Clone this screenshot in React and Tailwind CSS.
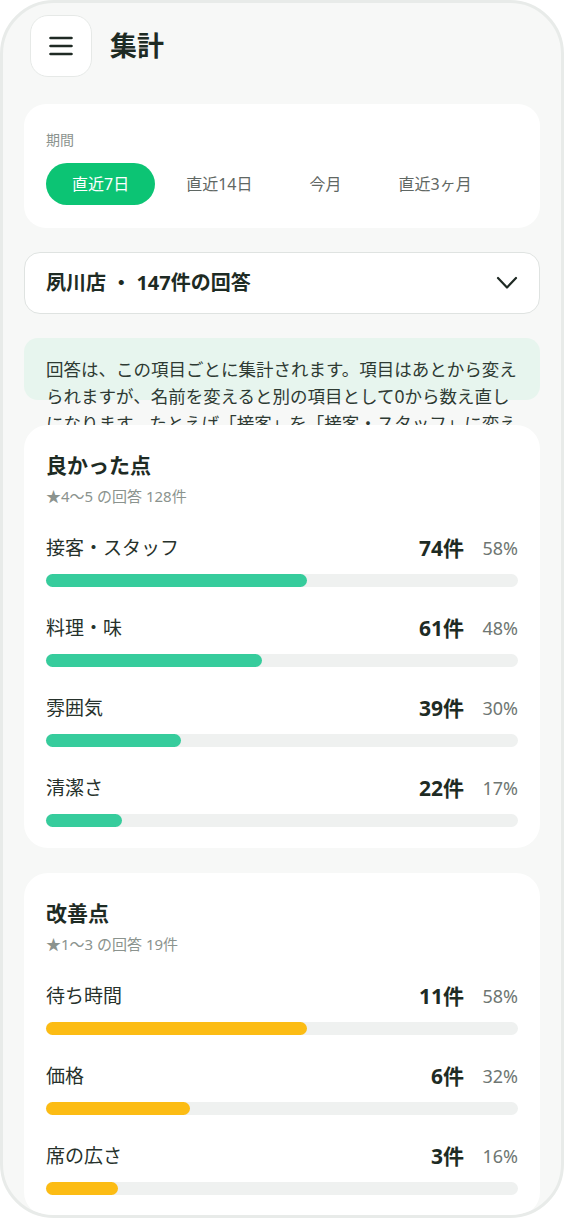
import { useState } from 'react';

const periods = ['直近7日', '直近14日', '今月', '直近3ヶ月'];

const goodItems = [
  { label: '接客・スタッフ', count: 74, pct: 58 },
  { label: '料理・味', count: 61, pct: 48 },
  { label: '雰囲気', count: 39, pct: 30 },
  { label: '清潔さ', count: 22, pct: 17 },
];

const badItems = [
  { label: '待ち時間', count: 11, pct: 58 },
  { label: '価格', count: 6, pct: 32 },
  { label: '席の広さ', count: 3, pct: 16 },
];

const StatCard = ({ title, sub, items, color }) => (
  <div className="relative rounded-[24px] bg-white px-[22px] pt-[26px] pb-[21px]">
    <h2 className="text-[21px] leading-[28px] font-bold text-[#1e2b24]">{title}</h2>
    <p className="mt-[7px] text-[15px] leading-[20px] text-[#8b938e]">{sub}</p>
    <div className="mt-[29px] flex flex-col gap-[28px]">
      {items.map((it) => (
        <div key={it.label}>
          <div className="flex items-center justify-between">
            <span className="text-[19px] leading-[26px] text-[#26312b]">{it.label}</span>
            <div className="flex items-center gap-[12px]">
              <span className="text-[21px] leading-[26px] font-bold text-[#1e2b24]">{it.count}件</span>
              <span className="w-[42px] text-right text-[18px] leading-[26px] text-[#6e7672]">{it.pct}%</span>
            </div>
          </div>
          <div className="mt-[13px] h-[13px] w-full rounded-full bg-[#eff1f0]">
            <div className={`h-full rounded-full ${color}`} style={{ width: `${it.pct * 0.952}%` }} />
          </div>
        </div>
      ))}
    </div>
  </div>
);

export default function App() {
  const [period, setPeriod] = useState(0);

  return (
    <div className="h-[1218px] w-[564px] bg-white" style={{ fontFamily: '"Noto Sans", "Noto Sans CJK JP", sans-serif' }}>
      <div className="h-full overflow-hidden rounded-[54px] border-[3px] border-[#e8ebe9] bg-[#f7f8f7] px-[21px] pt-[12px]">
        {/* header */}
        <div className="flex items-center gap-[18px] pl-[6px]">
          <button className="flex h-[62px] w-[62px] items-center justify-center rounded-[18px] border border-[#e6e9e7] bg-white">
            <svg width="24" height="20" viewBox="0 0 24 20" fill="none" stroke="#1f2a24" strokeWidth="2.6" strokeLinecap="round">
              <path d="M1.5 2h21M1.5 10h21M1.5 18h21" />
            </svg>
          </button>
          <h1 className="text-[27px] font-bold text-[#1e2b24]">集計</h1>
        </div>

        {/* period */}
        <div className="mt-[27px] rounded-[22px] bg-white px-[22px] pt-[26px] pb-[23px]">
          <p className="text-[14px] leading-[20px] text-[#8b938e]">期間</p>
          <div className="mt-[13px] flex gap-[5px]">
            {periods.map((p, i) => (
              <button
                key={p}
                onClick={() => setPeriod(i)}
                className={`h-[42px] rounded-full px-[26px] text-[16px] ${
                  period === i ? 'bg-[#0cc474] text-white' : 'text-[#5f6763]'
                }`}
              >
                {p}
              </button>
            ))}
          </div>
        </div>

        {/* store select */}
        <button className="mt-[24px] flex h-[62px] w-full items-center justify-between rounded-[16px] border-[1.5px] border-[#dfe3e1] bg-white pl-[21px] pr-[21px]">
          <span className="text-[20px] font-bold text-[#1e2b24]">夙川店 ・ 147件の回答</span>
          <svg width="22" height="14" viewBox="0 0 22 14" fill="none" stroke="#1f2a24" strokeWidth="2.2" strokeLinecap="round" strokeLinejoin="round">
            <path d="M2 2l9 9.5L20 2" />
          </svg>
        </button>

        {/* note */}
        <div className="mt-[24px] h-[62px] rounded-[14px] bg-[#e7f5ee] pl-[22px] pr-[19px] pt-[18px]">
          <p className="text-[17.5px] leading-[27px] text-[#2e3a33]">
            回答は、この項目ごとに集計されます。項目はあとから変えられますが、名前を変えると別の項目として0から数え直しになります。たとえば「接客」を「接客・スタッフ」に変えると、別の項目として扱われます。
          </p>
        </div>

        <div className="mt-[25px] flex flex-col gap-[25px]">
          <StatCard title="良かった点" sub="★4～5 の回答 128件" items={goodItems} color="bg-[#36cc9c]" />
          <StatCard title="改善点" sub="★1～3 の回答 19件" items={badItems} color="bg-[#fcbc14]" />
        </div>
      </div>
    </div>
  );
}
